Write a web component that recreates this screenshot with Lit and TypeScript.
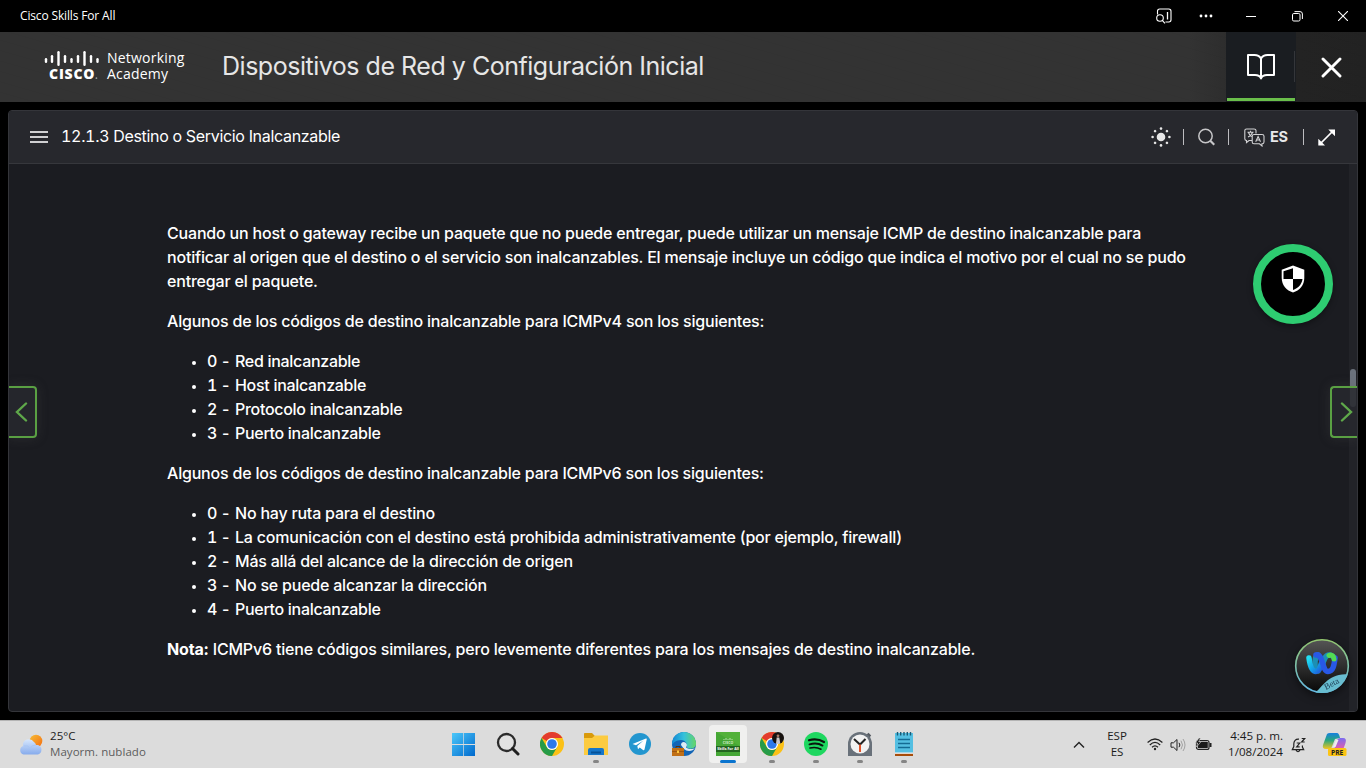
import { LitElement, html, svg, css } from "lit";
import { customElement } from "lit/decorators.js";

const v4Codes = ["Red inalcanzable", "Host inalcanzable", "Protocolo inalcanzable", "Puerto inalcanzable"];
const v6Codes = [
  "No hay ruta para el destino",
  "La comunicación con el destino está prohibida administrativamente (por ejemplo, firewall)",
  "Más allá del alcance de la dirección de origen",
  "No se puede alcanzar la dirección",
  "Puerto inalcanzable",
];

@customElement("title-bar")
class TitleBar extends LitElement {
  static styles = css`
    :host { display: flex; height: 32px; background: #000; color: #fff; justify-content: space-between; align-items: center; }
    .name { font: 12px "Open Sans", "Noto Sans", sans-serif; letter-spacing: -0.15px; padding: 0 0 1px 20px; }
    .controls { display: flex; align-items: center; height: 32px; }
    svg { display: block; }
    .find { margin-right: 17px; }
    .win { width: 46px; display: flex; justify-content: center; }
    .dots { width: 34px; display: flex; justify-content: center; margin-right: 5px; }
  `;
  render() {
    return html`
      <span class="name">Cisco Skills For All</span>
      <div class="controls">
        <svg class="find" width="16" height="16" viewBox="0 0 16 16" fill="none" stroke="#fff" stroke-width="1.1">
          <path d="M1.500 6.500V3.200A2.200 2.200 0 0 1 3.700 1H12.800A2.200 2.200 0 0 1 15 3.200V11.800A2.200 2.200 0 0 1 12.800 14H9.500" />
          <path d="M11.500 4V11.500" stroke-width="1.300" /><circle cx="4" cy="10" r="3.300" /><path d="M6.300 12.300L9 15.300" />
        </svg>
        <div class="dots">
          <svg width="14" height="4" fill="#fff"><circle cx="2" cy="2" r="1.400" /><circle cx="7" cy="2" r="1.400" /><circle cx="12" cy="2" r="1.400" /></svg>
        </div>
        <div class="win"><svg width="10" height="10"><path d="M0 5.500H10" stroke="#fff" /></svg></div>
        <div class="win">
          <svg width="11" height="11" fill="none" stroke="#fff"><rect x=".5" y="2.500" width="7.500" height="7.500" rx="1.300" /><path d="M2.500 .6H8A2.400 2.400 0 0 1 10.400 3V8" /></svg>
        </div>
        <div class="win"><svg width="10" height="10"><path d="M0 0L10 10M10 0L0 10" stroke="#fff" stroke-width="1.100" /></svg></div>
      </div>
    `;
  }
}

@customElement("course-header")
class CourseHeader extends LitElement {
  static styles = css`
    :host {
      display: flex; height: 70px; color: #fff;
      background:
        repeating-linear-gradient(16deg, transparent 0 9px, rgba(0, 0, 0, 0.025) 9px 10px),
        linear-gradient(90deg, #333 0, #333 87%, #232323 95%, #222 100%);
    }
    .logo { width: 222px; display: flex; align-items: flex-start; padding: 18px 0 0 44px; box-sizing: border-box; }
    .mark { width: 58px; display: flex; flex-direction: column; }
    .mark svg { display: block; }
    .cisco { font: 800 14px/14px "Open Sans", sans-serif; letter-spacing: 0.8px; padding-left: 5px; white-space: nowrap; }
    .cisco i { font-size: 8px; opacity: 0.5; font-style: normal; }
    .academy { font: 14px/16px "Open Sans", sans-serif; letter-spacing: 0.22px; padding-left: 5px; }
    .title { font: 400 25px/68px Inter, sans-serif; color: #e6e6e6; letter-spacing: -0.48px; white-space: nowrap; flex: 1; }
    .book {
      width: 70px; box-sizing: border-box; padding: 21px 0 0 20px;
      background:
        linear-gradient(#6abf4b, #6abf4b) 1px 66px / 68px 3px no-repeat,
        linear-gradient(#34363a, #34363a) 68px 19px / 1px 31px no-repeat,
        #1a1d21;
    }
    .close { width: 70px; box-sizing: border-box; padding: 25px 0 0 24.5px; }
    svg { display: block; }
  `;
  render() {
    const bars = [[0, 7, 5], [6, 4, 8], [12.5, 0, 15], [19, 4, 8], [25.5, 7, 5], [32, 4, 8], [38.5, 0, 15], [45, 4, 8], [51.5, 7, 5]];
    return html`
      <div class="logo">
        <div class="mark">
          <svg width="58" height="17" fill="#fff">${bars.map(([x, y, h]) => svg`<rect x=${x + 0.8} y=${y + 1} width="2.400" height=${h} rx="1.200" />`)}</svg>
          <span class="cisco">CISCO<i>.</i></span>
        </div>
        <div class="academy">Networking<br />Academy</div>
      </div>
      <div class="title">Dispositivos de Red y Configuración Inicial</div>
      <div class="book">
        <svg width="30" height="28" viewBox="0 0 30 28" fill="none" stroke="#fff" stroke-width="2">
          <path d="M15 25V5.500C13.500 2.800 11 2 8.500 2H2V22H9C12 22 14 23 15 25.500C16 23 18 22 21 22H28V2H21.500C19 2 16.500 2.800 15 5.500" stroke-linejoin="round" />
        </svg>
      </div>
      <div class="close"><svg width="21" height="21"><path d="M2 2L19 19M19 2L2 19" stroke="#fff" stroke-width="2.900" stroke-linecap="round" /></svg></div>
    `;
  }
}

@customElement("lesson-panel")
class LessonPanel extends LitElement {
  static styles = css`
    :host { display: flex; flex-direction: column; position: relative; height: 602px; box-sizing: border-box; margin: 8px 8px 0; border: 1px solid #34353a; border-radius: 4px; background: #1b1c21; color: #fff; font-family: Inter, sans-serif; overflow: hidden; }
    .bar { height: 53px; flex: none; box-sizing: border-box; background: #27282d; border-bottom: 1px solid #36373c; display: flex; align-items: center; }
    .menu { width: 18px; height: 12px; margin: 0 13px 0 21px; display: flex; flex-direction: column; justify-content: space-between; }
    .menu b { height: 2px; background: #d0d0d2; }
    .topic { font-size: 16px; letter-spacing: -0.31px; font-variant-numeric: tabular-nums; flex: 1; white-space: nowrap; padding-bottom: 2px; }
    .tools { display: flex; align-items: center; }
    .tools svg { display: block; }
    .sep { width: 1px; height: 16px; background: #bdbdc0; }
    .sun { margin-right: 12px; } .search { margin: 0 13px 0 14px; } .lang { margin: 0 5px 0 15px; }
    .es { font-size: 14.500px; font-weight: 700; color: #e8e8ea; width: 33px; letter-spacing: -0.4px; padding-bottom: 1px; }
    .expand { margin: 0 22px 0 14px; }
    .body { flex: 1; display: flex; }
    .text { flex: 1; padding: 57px 0 0 158px; font-size: 16px; line-height: 24px; font-weight: 500; letter-spacing: -0.186px; white-space: nowrap; }
    p { margin: 0 0 16px; }
    .lead { letter-spacing: -0.205px; }
    ul { margin: 0 0 16px; padding-left: 25px; list-style: none; letter-spacing: -0.212px; }
    .short { letter-spacing: -0.3px; }
    li { display: flex; align-items: center; }
    .dot { width: 4px; height: 4px; border-radius: 50%; background: #fff; margin: 3px 11px 0 0; }
    .num { width: 15px; font-variant-numeric: tabular-nums; }
    .dash { width: 13px; }
    .track { width: 8px; background: #222328; padding: 205px 0 0 1px; box-sizing: border-box; }
    .thumb { width: 6px; height: 38px; border-radius: 3px; background: #6b727c; }
    .nav { position: absolute; top: 275px; width: 28px; height: 52px; box-sizing: border-box; border: 2px solid #5aa043; background: rgba(39, 40, 46, 0.85); box-shadow: 0 0 12px rgba(90, 90, 90, 0.25); }
    .prev { left: 0; border-left: 0; border-radius: 0 4px 4px 0; padding: 14px 0 0 5.500px; }
    .next { right: 0; width: 27px; border-right: 0; border-radius: 4px 0 0 4px; padding: 14px 0 0 6.500px; }
    .nav svg { display: block; }
    .shield { position: absolute; right: 24px; top: 133px; width: 80px; height: 80px; box-sizing: border-box; border: 8px solid #2ecc71; border-radius: 50%; background: #000; box-shadow: 0 2px 6px rgba(0, 0, 0, 0.4); }
    .shield svg { display: block; margin: 13px auto 0; }
    .assistant { position: absolute; right: 7px; bottom: 17px; width: 56px; height: 56px; filter: drop-shadow(0 3px 4px rgba(0, 0, 0, 0.5)); }
  `;
  codes(list: string[]) {
    return html`<ul>${list.map((c, i) => html`<li><span class="dot"></span><span class="num">${i}</span><span class="dash">-</span><span class=${c.length < 24 ? "short" : ""}>${c}</span></li>`)}</ul>`;
  }
  render() {
    return html`
      <div class="bar">
        <div class="menu"><b></b><b></b><b></b></div>
        <div class="topic">12.1.3 Destino o Servicio Inalcanzable</div>
        <div class="tools">
          <svg class="sun" width="20" height="20" fill="#e8e8e8"><circle cx="10" cy="10" r="4.300" />
            ${[0, 45, 90, 135, 180, 225, 270, 315].map((a) => svg`<circle cx="10" cy="1.600" r="1.300" transform=${`rotate(${a} 10 10)`} />`)}
          </svg>
          <i class="sep"></i>
          <svg class="search" width="17" height="18" fill="none" stroke="#c6c6c8" stroke-width="1.500"><circle cx="7.500" cy="8" r="6.700" /><path d="M12.300 12.800L16.300 16.800" stroke-width="2.200" /></svg>
          <i class="sep"></i>
          <svg class="lang" width="21" height="19" fill="none" stroke="#d2d2d4" stroke-width="1.100">
            <path d="M8 12.500H5L2.500 14.500V12.500C1.200 12.500 .8 11.700 .8 10.800V2.500C.8 1.500 1.500 1 2.500 1H10C11.200 1 12 1.500 12 2.500V5.500" />
            <path d="M10 6.500H18C19.200 6.500 20 7.200 20 8.200V14C20 15.200 19.200 15.800 18 15.800V18L15.500 15.800H10C8.800 15.800 8.200 15.200 8.200 14V8.200C8.200 7.200 8.800 6.500 10 6.500Z" />
            <path d="M3.500 4.200H9.500M6.500 2.700V4.200M8.500 4.500C7.800 6.700 6 8.200 4 9M4.500 4.500C5 6.200 6.500 8 8 8.500M11.700 13.800L14.100 8.500L16.500 13.800M12.500 12H15.700" />
          </svg>
          <span class="es">ES</span>
          <i class="sep"></i>
          <svg class="expand" width="17" height="17"><path d="M3 14L14 3" stroke="#fff" stroke-width="1.700" /><path d="M10.300 .5H17V7.200ZM.3 9.800V16.500H7Z" fill="#fff" /></svg>
        </div>
      </div>
      <div class="body">
        <div class="text">
          <p>Cuando un host o gateway recibe un paquete que no puede entregar, puede utilizar un mensaje ICMP de destino inalcanzable para<br />notificar al origen que el destino o el servicio son inalcanzables. El mensaje incluye un código que indica el motivo por el cual no se pudo<br />entregar el paquete.</p>
          <p class="lead">Algunos de los códigos de destino inalcanzable para ICMPv4 son los siguientes:</p>
          ${this.codes(v4Codes)}
          <p class="lead">Algunos de los códigos de destino inalcanzable para ICMPv6 son los siguientes:</p>
          ${this.codes(v6Codes)}
          <p><b>Nota:</b> ICMPv6 tiene códigos similares, pero levemente diferentes para los mensajes de destino inalcanzable.</p>
        </div>
        <div class="track"><div class="thumb"></div></div>
      </div>
      <div class="nav prev"><svg width="14" height="20" fill="none" stroke="#5fa84a" stroke-width="2.400" stroke-linecap="round"><path d="M11 1.500L2 10L11 18.500" /></svg></div>
      <div class="nav next"><svg width="14" height="20" fill="none" stroke="#5fa84a" stroke-width="2.400" stroke-linecap="round"><path d="M3 1.500L12 10L3 18.500" /></svg></div>
      <div class="shield">
        <svg width="24" height="28" viewBox="0 0 24 28"><path d="M12 .5L23.300 4.700V13C23.300 20 18.500 25.500 12 27.500C5.500 25.500 .7 20 .7 13V4.700Z" fill="#fff" /><path d="M12 3.300V14H2.500V6.300ZM12 14H21.500C20.800 19.500 17 23.300 12 25Z" fill="#000" /></svg>
      </div>
      <svg class="assistant" viewBox="0 0 56 56">
        <defs>
          <linearGradient id="ring" x2="0" y2="1"><stop stop-color="#94c770" /><stop offset="1" stop-color="#65b9e4" /></linearGradient>
          <linearGradient id="disc" x2="0" y2="1"><stop stop-color="#555" /><stop offset="1" stop-color="#080808" /></linearGradient>
          <linearGradient id="cyan" x2="1" y2="1"><stop stop-color="#22ddf2" /><stop offset=".55" stop-color="#139ce8" /><stop offset="1" stop-color="#2455db" /></linearGradient>
          <clipPath id="face"><circle cx="28" cy="28" r="27" /></clipPath>
        </defs>
        <circle cx="28" cy="28" r="26.300" fill="url(#disc)" stroke="url(#ring)" stroke-width="1.600" />
        <path d="M21 55C31 46 34 36 56 36V56H21Z" fill="#68bdd0" clip-path="url(#face)" />
        <g fill="none" stroke-width="5.500" stroke-linecap="round">
          <path d="M24 17C20 18 20 33 24 33M28 28C30 22 31 17 35 17C37 17 39 18 40 20" stroke="#1c8fb4" />
          <path d="M15 20C16 28 18 33.500 22 33.500C26 33.500 26 28 28 24" stroke="url(#cyan)" />
          <path d="M22 17C29 15 28 33.500 34 33.500C39 33.500 40 28 41 20" stroke="#2858e6" />
          <path d="M35 17.500C38 16 40 19 40 21" stroke="#53dc52" stroke-width="5" />
        </g>
        <text x="32" y="52" transform="rotate(-28 32 52)" font-family="Liberation Serif, serif" font-size="8.500" fill="#20435a">Beta</text>
      </svg>
    `;
  }
}

@customElement("task-bar")
class TaskBar extends LitElement {
  static styles = css`
    :host { display: flex; height: 48px; background: #dcdcdc; border-top: 1px solid #b4b4b4; box-sizing: border-box; font: 12px/16px "Open Sans", "Noto Sans", sans-serif; color: #1b1b1b; overflow: hidden; }
    svg { display: block; }
    .weather { width: 442px; display: flex; box-sizing: border-box; padding: 7px 0 0 18px; }
    .weather svg { margin: 6px 7px 0 0; }
    .weather div { font-size: 11.500px; letter-spacing: 0.05px; }
    .cond { color: #5c5c5c; }
    .apps { display: flex; width: 622px; }
    .app { width: 44px; height: 47px; display: flex; flex-direction: column; align-items: center; box-sizing: border-box; padding-top: 11px; }
    .app i { width: 6px; height: 3px; border-radius: 2px; background: #858585; margin-top: 4px; }
    .app.active { background: #f0f0ef; width: 38px; height: 38px; margin: 4px 3px 0; padding-top: 7px; border-radius: 4px; }
    .app.active i { width: 16px; flex: none; background: #0a74cf; }
    .chev { width: 30px; } .langs { width: 49px; } .wifi { width: 24px; } .vol { width: 23px; } .bat { width: 26px; }
    .cell { display: flex; justify-content: center; align-items: center; height: 47px; flex: none; box-sizing: border-box; text-align: center; }
    .langs { padding-right: 3px; font-size: 11.500px; padding-bottom: 1px; }
    .clock { width: 67px; flex: none; padding-top: 7px; text-align: right; font-size: 11.600px; white-space: nowrap; }
    .bell { width: 30px; } .copilot { width: 42px; }
  `;

  chromeIcon() {
    return svg`
      <circle cx="12" cy="12" r="12" fill="#fbc116" />
      <path d="M1.600 6A12 12 0 0 1 22.400 6H12A6 6 0 0 0 6.800 9Z" fill="#e33b2e" />
      <path d="M1.600 6A12 12 0 0 0 12 24L17.200 15A6 6 0 0 1 6.800 15Z" fill="#269b48" />
      <circle cx="12" cy="12" r="6" fill="#fff" /><circle cx="12" cy="12" r="4.800" fill="#2c78ea" />`;
  }

  render() {
    const apps: [unknown, string][] = [
      [svg`<defs><linearGradient id="win" gradientUnits="userSpaceOnUse" x1="0" y1="1" x2="23" y2="24"><stop stop-color="#4cc8fa" /><stop offset="1" stop-color="#0069cd" /></linearGradient></defs><path d="M0 1H11.300V12.100H0ZM12 1H23V12.100H12ZM0 12.900H11.300V24H0ZM12 12.900H23V24H12Z" fill="url(#win)" />`, ""],
      [svg`<circle cx="10.500" cy="10.500" r="8.500" fill="#e2e2e2" stroke="#2b2b2b" stroke-width="2.300" /><path d="M16.500 16.500L22 22" stroke="#1e1e1e" stroke-width="3" stroke-linecap="round" />`, ""],
      [this.chromeIcon(), ""],
      [svg`<path d="M0 1.500Q0 1 1 1H8L11 4H23Q24 4 24 5V10H0Z" fill="#d99a0b" /><path d="M0 6H8L11 3.500H24V23H0Z" fill="#fccb40" /><path d="M4 23V18Q4 16 6 16H18Q20 16 20 18V23Z" fill="#1676c9" /><path d="M7 19.500H17V21.500H7Z" fill="#075298" />`, "run"],
      [svg`<circle cx="12" cy="12" r="11" fill="#2396cf" /><path d="M4.500 12L18 6.500Q19 6.300 18.700 7.500L16.500 17.500Q16 18.600 15 18L11.700 15.500L10 17.200L9.300 14L15.500 8.500L8 13.200Z" fill="#fff" />`, ""],
      [svg`<defs><linearGradient id="edge" x2="1"><stop stop-color="#1187d4" /><stop offset=".5" stop-color="#35c1db" /><stop offset="1" stop-color="#66d665" /></linearGradient></defs>
        <circle cx="12" cy="12" r="12" fill="#1264b5" /><path d="M0 12A12 12 0 0 1 24 12C24 17 17 18 14.500 15C16 13 14 8 9 8C4 8 1 11 0 13Z" fill="url(#edge)" /><path d="M9 13C9 9 14 9 15 13L14 15.500C18 18 21 17 23 16C21 19.500 15 20 12 17Z" fill="#dcecf4" /><rect x="0" y="16" width="12" height="8" fill="#c06f16" /><path d="M4 16V14.500H8V16" fill="none" stroke="#603109" /><path d="M0 19.500H12" stroke="#8a4a0e" stroke-width=".7" /><rect x="5" y="18.500" width="2" height="2.500" fill="#ffc83c" />`, ""],
      [svg`<rect width="24" height="24" fill="#45a735" /><path d="M0 0L24 14V0Z" fill="#5cb83d" opacity=".6" /><rect y="14" width="24" height="6" fill="#23651f" /><path d="M8 8V7M10 8V6M12 8V7M14 8V6M16 8V7" stroke="#d7efce" stroke-width=".8" /><text x="12" y="12" text-anchor="middle" font-family="Open Sans, sans-serif" font-size="3.500" font-weight="700" fill="#d7efce">CISCO</text><text x="12" y="18.300" text-anchor="middle" font-family="Open Sans, sans-serif" font-size="3.600" font-weight="700" fill="#fff">Skills For All</text>`, "active"],
      [svg`${this.chromeIcon()}<circle cx="18" cy="6" r="6" fill="#17110f" /><path d="M16 11.700L16.700 5.500H19.300L20.300 11.500Q18 12.500 16 11.700Z" fill="#c9c6c8" /><circle cx="18" cy="3.800" r="1.400" fill="#a77967" />`, "run"],
      [svg`<circle cx="12" cy="12" r="12" fill="#1ed760" /><g fill="none" stroke="#0a150d" stroke-linecap="round"><path d="M5 8.300Q13 6 20 10" stroke-width="2.200" /><path d="M5.500 12.400Q13 10.200 18.500 13.600" stroke-width="1.900" /><path d="M6 16Q12 14.500 17 17.200" stroke-width="1.600" /></g>`, "run"],
      [svg`<path d="M18 3L20.500 .8L23.200 3.500L21 6" fill="#555b62" /><path d="M0 12A12 12 0 0 1 24 12V24H0Z" fill="#69717a" /><circle cx="12" cy="12" r="9.500" fill="#f2f2f2" /><path d="M6 7L12 12.500L17.500 7" fill="none" stroke="#222" stroke-width="2" /><path d="M12 12.500V20" stroke="#e1542b" stroke-width="2" />`, "run"],
      [svg`<rect x="3" y="1" width="18" height="20" fill="#54bfe2" /><rect x="3" y="21.500" width="18" height="2.500" fill="#a74d0b" /><rect x="3" y="20.500" width="18" height="1.200" fill="#f5f5f5" /><path d="M5.500 0V3.500M8.700 0V3.500M12 0V3.500M15.300 0V3.500M18.500 0V3.500" stroke="#185a76" stroke-width="1.400" /><path d="M6 7.500H18M6 11.500H18M6 15.500H18" stroke="#146b94" stroke-width="1.500" />`, "run"],
    ];
    return html`
      <div class="weather">
        <svg width="25" height="22" viewBox="0 0 25 22">
          <defs><linearGradient id="sky" x2="0" y2="1"><stop stop-color="#d7e7fd" /><stop offset="1" stop-color="#86abec" /></linearGradient><linearGradient id="sol" x2="1" y2="1"><stop stop-color="#f6bd35" /><stop offset="1" stop-color="#f46d12" /></linearGradient></defs>
          <circle cx="18" cy="7" r="6.300" fill="url(#sol)" />
          <path d="M5 12A6 6 0 0 1 16 8A5 5 0 0 1 18 11H20A5 5 0 0 1 20 20.500H5.500A4.500 4.500 0 0 1 5 12Z" fill="url(#sky)" /><path d="M6 12Q10 11 12 14Q14 11 18 11" fill="none" stroke="#a8c5f3" />
        </svg>
        <div>25°C<br /><span class="cond">Mayorm. nublado</span></div>
      </div>
      <div class="apps">${apps.map(([icon, state]) => html`<div class="app ${state}"><svg width="24" height="24" viewBox="0 0 24 24">${icon}</svg>${state ? html`<i></i>` : ""}</div>`)}</div>
      <div class="cell chev"><svg width="12" height="8"><path d="M1 6.500L6 1.500L11 6.500" fill="none" stroke="#222" stroke-width="1.400" /></svg></div>
      <div class="cell langs">ESP<br />ES</div>
      <div class="cell wifi">
        <svg width="16" height="13" fill="none" stroke="#222" stroke-width="1.200"><path d="M.6 4.500Q8-2.500 15.400 4.500M2.800 7Q8 1.800 13.200 7M5 9.300Q8 6.500 11 9.300" /><circle cx="8" cy="11" r="1.200" fill="#222" stroke="none" /></svg>
      </div>
      <div class="cell vol"><svg width="17" height="14" fill="none" stroke="#222"><path d="M1 4.800H3.500L7 1.500V12.500L3.500 9.200H1Z" stroke-linejoin="round" /><path d="M9 4.800Q10.800 7 9 9.200" /><path d="M11 2.700Q14 7 11 11.300M13 1Q17 7 13 13" stroke="#a2a2a2" /></svg></div>
      <div class="cell bat"><svg width="17" height="13"><rect x="1.500" y="2.500" width="12.500" height="9" rx="2" fill="none" stroke="#222" stroke-width="1.200" /><rect x="2.800" y="3.800" width="10" height="6.400" rx=".8" fill="#1a1a1a" /><path d="M14.500 5H16.500V9H14.500Z" fill="#222" /><path d="M4 0L.5 5H2.700L1.500 9L6 3.700H3.700L5.500 0Z" fill="#111" stroke="#dcdcdc" stroke-width=".6" /></svg></div>
      <div class="clock">4:45 p. m.<br />1/08/2024</div>
      <div class="cell bell"><svg width="15" height="16" fill="none" stroke="#222" stroke-width="1.200"><path d="M8 2.200C4.500 1.800 2.800 4.200 2.800 7V9.500L1.300 12.700H12.700L11.400 10V8.500M5 13Q7 16.500 9 13M5.700 6H8.700L5.700 9.800H8.700" /><path d="M10.700 1.500H13.700L10.700 5H13.700" /></svg></div>
      <div class="cell copilot">
        <svg width="25" height="25" viewBox="0 0 25 25">
          <defs><linearGradient id="cpa" x2="0" y2="1"><stop stop-color="#1680df" /><stop offset=".45" stop-color="#27a77f" /><stop offset="1" stop-color="#f4c520" /></linearGradient><linearGradient id="cpb" x2="0" y2="1"><stop stop-color="#7a6cf0" /><stop offset="1" stop-color="#ed5da5" /></linearGradient></defs>
          <path d="M5 2Q6 1 8 1H15Q17 1 18 6L13 7L9 17H4Q0 17 1 13Z" fill="url(#cpa)" /><path d="M18 6H21Q25 6 23.500 11L21 18H10Q13 17 14 12Q15 6 18 6Z" fill="url(#cpb)" /><path d="M14 8H16.500L13.500 15H11Z" fill="#eee" />
          <rect x="6" y="16" width="18.500" height="8" rx="1.500" fill="#fcc413" /><text x="15.200" y="22.500" text-anchor="middle" font-family="Open Sans, sans-serif" font-size="6.700" font-weight="700" fill="#222">PRE</text>
        </svg>
      </div>
    `;
  }
}

@customElement("app-root")
class AppRoot extends LitElement {
  static styles = css`
    :host { display: flex; flex-direction: column; justify-content: space-between; width: 1366px; height: 768px; background: #000; overflow: hidden; }
  `;
  render() {
    return html`<div><title-bar></title-bar><course-header></course-header><lesson-panel></lesson-panel></div><task-bar></task-bar>`;
  }
}
